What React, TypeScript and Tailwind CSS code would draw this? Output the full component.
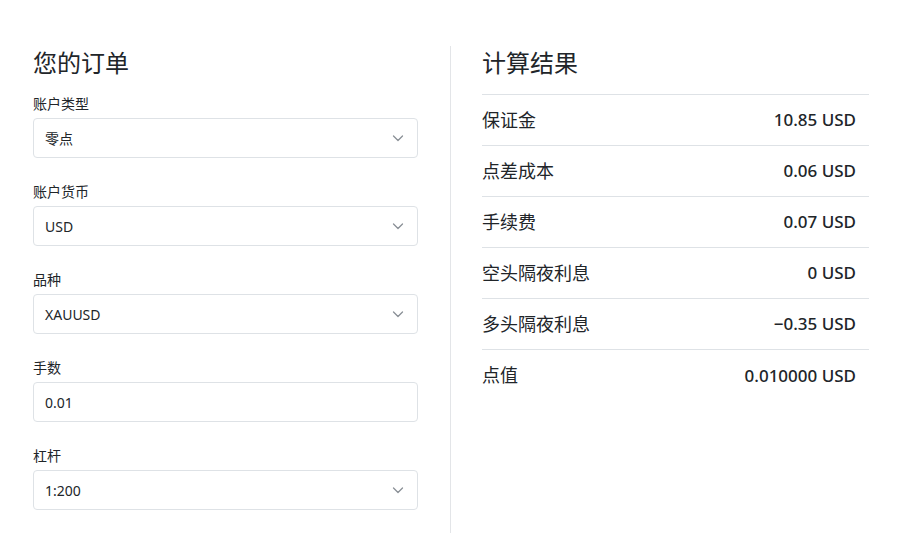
import React from "react";

const font = { fontFamily: '"Noto Sans", "Noto Sans CJK SC", sans-serif' };

function Chevron() {
  return (
    <svg width="12" height="8" viewBox="0 0 12 8" fill="none" className="shrink-0">
      <path d="M1.5 2l4.5 4.5L10.5 2" stroke="#8a9096" strokeWidth="1.3" strokeLinecap="round" strokeLinejoin="round" />
    </svg>
  );
}

function Field({ label, value, select = true }: { label: string; value: string; select?: boolean }) {
  return (
    <div className="mb-[23px]">
      <div className="pt-px text-[14px] leading-[20px] text-[#212529]">{label}</div>
      <div className="mt-[4px] h-[40px] flex items-center justify-between border border-[#dee2e6] rounded-[4px] pl-[11px] pr-[13px] text-[14px] text-[#212529]">
        <span>{value}</span>
        {select && <Chevron />}
      </div>
    </div>
  );
}

const rows: [string, string][] = [
  ["保证金", "10.85 USD"],
  ["点差成本", "0.06 USD"],
  ["手续费", "0.07 USD"],
  ["空头隔夜利息", "0 USD"],
  ["多头隔夜利息", "\u22120.35 USD"],
  ["点值", "0.010000 USD"],
];

export default function App() {
  return (
    <div className="w-[898px] h-[540px] bg-white overflow-hidden" style={font}>
      <div className="flex pt-[46px] pl-[33px]">
        <div className="w-[418px] pr-[32px] border-r border-[#e3e5e8]">
          <h2 className="pt-px text-[24px] leading-[32px] text-[#212529] mb-[14px]">您的订单</h2>
          <Field label="账户类型" value="零点" />
          <Field label="账户货币" value="USD" />
          <Field label="品种" value="XAUUSD" />
          <Field label="手数" value="0.01" select={false} />
          <Field label="杠杆" value="1:200" />
        </div>
        <div className="w-[418px] pl-[31px]">
          <h2 className="pt-px text-[24px] leading-[32px] text-[#212529] mb-[15px]">计算结果</h2>
          <div className="border-t border-[#dee2e6]">
            {rows.map(([k, v], i) => (
              <div
                key={k}
                className={
                  "h-[51px] flex items-center justify-between pr-[13px] " +
                  (i < rows.length - 1 ? "border-b border-[#dee2e6]" : "")
                }
              >
                <span className="text-[18px] text-[#212529]">{k}</span>
                <span className="text-[17px] font-medium text-[#212529]">{v}</span>
              </div>
            ))}
          </div>
        </div>
      </div>
    </div>
  );
}
